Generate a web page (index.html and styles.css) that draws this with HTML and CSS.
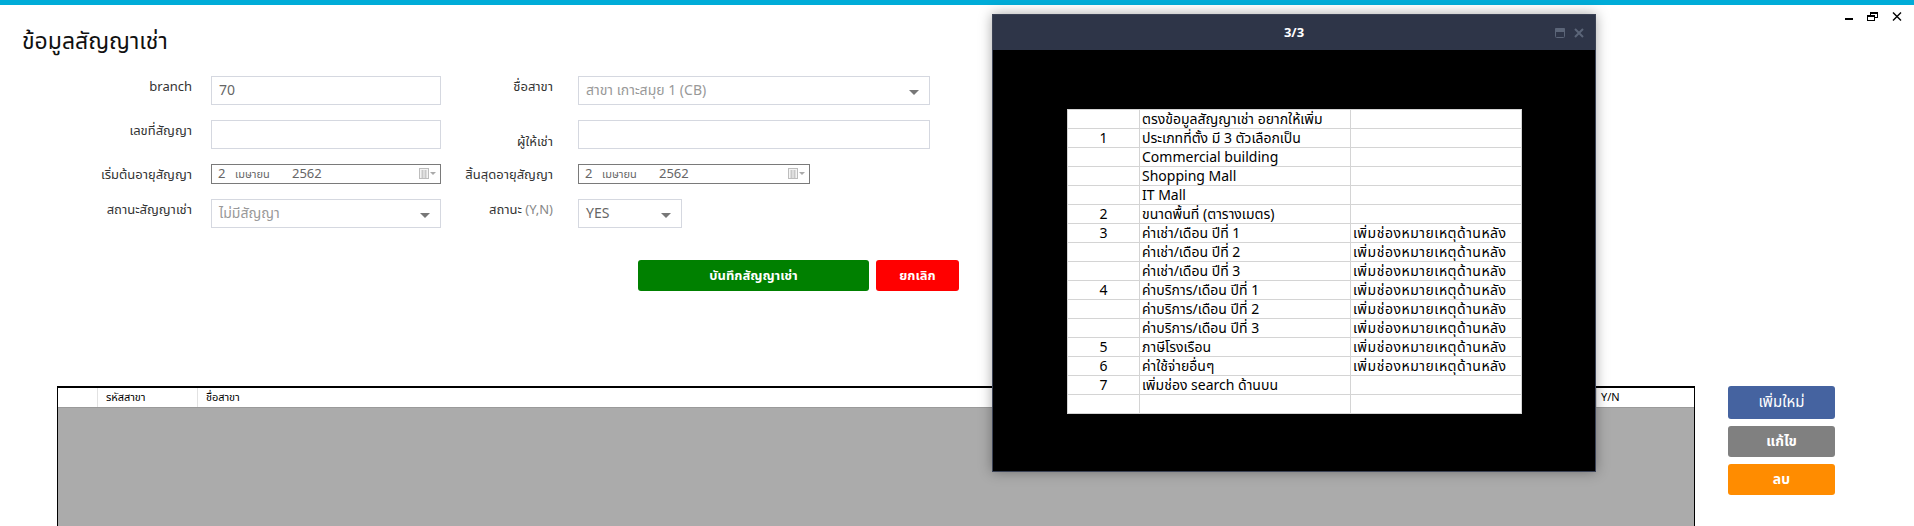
FILE: index.html
```html
<!DOCTYPE html>
<html lang="th">
<head>
<meta charset="utf-8">
<title>ข้อมูลสัญญาเช่า</title>
<link rel="stylesheet" href="styles.css">
</head>
<body>
<div class="topbar"></div>

<div class="winctl">
  <span class="wc-min"></span>
  <svg class="wc-restore" width="11" height="9" viewBox="0 0 11 9"><rect x="3.5" y="0.5" width="7" height="5" fill="none" stroke="#000"/><rect x="3" y="0" width="8" height="2" fill="#000"/><rect x="0.5" y="3.5" width="7" height="5" fill="#fff" stroke="#000"/><rect x="0" y="3" width="8" height="2" fill="#000"/></svg>
  <svg class="wc-close" width="10" height="9" viewBox="0 0 10 9"><path d="M1 0.5 L9 8.5 M9 0.5 L1 8.5" stroke="#000" stroke-width="1.4"/></svg>
</div>

<main class="page">
  <h1 class="title">ข้อมูลสัญญาเช่า</h1>

  <div class="form">
    <label class="lbl">branch</label>
    <div class="field input"><span class="val">70</span></div>
    <label class="lbl">ชื่อสาขา</label>
    <div class="field select wide"><span class="ph">สาขา เกาะสมุย 1 (CB)</span><span class="caret"></span></div>

    <label class="lbl">เลขที่สัญญา</label>
    <div class="field input"></div>
    <label class="lbl lbl-low">ผู้ให้เช่า</label>
    <div class="field input wide"></div>

    <label class="lbl">เริ่มต้นอายุสัญญา</label>
    <div class="field date"><span class="d">2</span><span class="m">เมษายน</span><span class="y">2562</span><span class="cal"><svg width="10" height="11" viewBox="0 0 10 11"><rect x="0.5" y="0.5" width="9" height="10" fill="#f4f4f4" stroke="#bdbdbd"/><path d="M2 3h6M2 5h6M2 7h6M2 9h6M3.5 2v8M6.5 2v8" stroke="#c8c8c8" stroke-width="1"/></svg><span class="mini-caret"></span></span></div>
    <label class="lbl">สิ้นสุดอายุสัญญา</label>
    <div class="field date date2"><span class="d">2</span><span class="m">เมษายน</span><span class="y">2562</span><span class="cal"><svg width="10" height="11" viewBox="0 0 10 11"><rect x="0.5" y="0.5" width="9" height="10" fill="#f4f4f4" stroke="#bdbdbd"/><path d="M2 3h6M2 5h6M2 7h6M2 9h6M3.5 2v8M6.5 2v8" stroke="#c8c8c8" stroke-width="1"/></svg><span class="mini-caret"></span></span></div>

    <label class="lbl">สถานะสัญญาเช่า</label>
    <div class="field select"><span class="ph">ไม่มีสัญญา</span><span class="caret"></span></div>
    <label class="lbl">สถานะ <span class="muted">(Y,N)</span></label>
    <div class="field select small"><span class="val">YES</span><span class="caret"></span></div>
  </div>

  <div class="actions">
    <button class="btn btn-save">บันทึกสัญญาเช่า</button>
    <button class="btn btn-cancel">ยกเลิก</button>
  </div>

  <div class="bottom">
    <div class="grid">
      <div class="grid-head">
        <div class="gh gh-row"></div>
        <div class="gh gh-code">รหัสสาขา</div>
        <div class="gh gh-name">ชื่อสาขา</div>
        <div class="gh gh-yn">Y/N</div>
      </div>
      <div class="grid-body"></div>
    </div>
    <div class="side">
      <button class="sbtn sb-new">เพิ่มใหม่</button>
      <button class="sbtn sb-edit">แก้ไข</button>
      <button class="sbtn sb-del">ลบ</button>
    </div>
  </div>
</main>

<div class="modal">
  <div class="modal-head">
    <span class="modal-title">3/3</span>
    <span class="mh-icons">
      <svg width="10" height="10" viewBox="0 0 10 10"><rect x="0.5" y="0.5" width="9" height="9" rx="1" fill="none" stroke="#5b6578"/><rect x="0" y="0" width="10" height="4" rx="1" fill="#5b6578"/></svg>
      <svg width="10" height="10" viewBox="0 0 10 10"><path d="M1 1L9 9M9 1L1 9" stroke="#5b6578" stroke-width="2"/></svg>
    </span>
  </div>
  <div class="modal-body">
    <table class="sheet">
      <tr><td></td><td>ตรงข้อมูลสัญญาเช่า อยากให้เพิ่ม</td><td></td></tr>
      <tr><td>1</td><td>ประเภทที่ตั้ง มี 3 ตัวเลือกเป็น</td><td></td></tr>
      <tr><td></td><td>Commercial building</td><td></td></tr>
      <tr><td></td><td>Shopping Mall</td><td></td></tr>
      <tr><td></td><td>IT Mall</td><td></td></tr>
      <tr><td>2</td><td>ขนาดพื้นที่ (ตารางเมตร)</td><td></td></tr>
      <tr><td>3</td><td>ค่าเช่า/เดือน ปีที่ 1</td><td>เพิ่มช่องหมายเหตุด้านหลัง</td></tr>
      <tr><td></td><td>ค่าเช่า/เดือน ปีที่ 2</td><td>เพิ่มช่องหมายเหตุด้านหลัง</td></tr>
      <tr><td></td><td>ค่าเช่า/เดือน ปีที่ 3</td><td>เพิ่มช่องหมายเหตุด้านหลัง</td></tr>
      <tr><td>4</td><td>ค่าบริการ/เดือน ปีที่ 1</td><td>เพิ่มช่องหมายเหตุด้านหลัง</td></tr>
      <tr><td></td><td>ค่าบริการ/เดือน ปีที่ 2</td><td>เพิ่มช่องหมายเหตุด้านหลัง</td></tr>
      <tr><td></td><td>ค่าบริการ/เดือน ปีที่ 3</td><td>เพิ่มช่องหมายเหตุด้านหลัง</td></tr>
      <tr><td>5</td><td>ภาษีโรงเรือน</td><td>เพิ่มช่องหมายเหตุด้านหลัง</td></tr>
      <tr><td>6</td><td>ค่าใช้จ่ายอื่นๆ</td><td>เพิ่มช่องหมายเหตุด้านหลัง</td></tr>
      <tr><td>7</td><td>เพิ่มช่อง search ด้านบน</td><td></td></tr>
      <tr><td></td><td></td><td></td></tr>
    </table>
  </div>
</div>
</body>
</html>
```

FILE: styles.css
```css
* { box-sizing: border-box; }
html, body { margin: 0; padding: 0; background: #fff; }
body {
  width: 1914px;
  height: 526px;
  overflow: hidden;
  position: relative;
  font-family: "Segoe UI", Tahoma, "Noto Sans Thai", "Noto Sans", "Liberation Sans", sans-serif;
  color: #222;
}
.topbar { height: 5px; background: #00acd8; }

.winctl {
  position: absolute;
  top: 12px;
  right: 12px;
  display: flex;
  align-items: flex-start;
  gap: 14px;
}
.wc-min { display: block; width: 8px; height: 2px; background: #000; margin-top: 6px; }

.page { padding: 0 0 0 22px; }
.title {
  margin: 0;
  padding-top: 22px;
  font-size: 23px;
  font-weight: 400;
  line-height: 30px;
  color: #111;
}

.form {
  margin-top: 19px;
  display: grid;
  grid-template-columns: 189px 230px 137px 352px;
  grid-template-rows: 29px 29px 20px 29px;
  row-gap: 15px;
  align-items: start;
}
.lbl {
  font-size: 13px;
  color: #333;
  text-align: right;
  padding-top: 2px;
  line-height: 18px;
  white-space: nowrap;
}
.form > .lbl:nth-child(4n+1) { padding-right: 19px; }
.form > .lbl:nth-child(4n+3) { padding-right: 25px; }
.lbl-low { padding-top: 13px; }
.muted { color: #888; }

.field {
  height: 29px;
  border: 1px solid #d5d8e0;
  background: #fff;
  display: flex;
  align-items: center;
  padding: 0 7px;
  font-size: 14px;
  color: #555;
  position: relative;
}
.field.wide { width: 352px; }
.field.small { width: 104px; }
.ph { color: #999; }
.val { color: #666; }
.caret {
  position: absolute;
  right: 10px;
  top: 13px;
  width: 0; height: 0;
  border-left: 5px solid transparent;
  border-right: 5px solid transparent;
  border-top: 5px solid #777;
}
.field.date {
  height: 20px;
  border: 1px solid #7a7a7a;
  font-size: 13px;
  color: #666;
  padding: 0 6px;
}
.field.date2 { width: 232px; }
.date .d { width: 17px; }
.date .m { font-size: 11px; width: 57px; }
.cal { position: absolute; right: 4px; top: 3px; display: flex; align-items: center; gap: 1px; }
.mini-caret {
  width: 0; height: 0;
  border-left: 3px solid transparent;
  border-right: 3px solid transparent;
  border-top: 3px solid #aaa;
}

.actions {
  margin: 32px 0 0 616px;
  display: flex;
  gap: 7px;
}
.btn {
  height: 31px;
  border: none;
  border-radius: 3px;
  color: #fff;
  font-family: inherit;
  font-weight: 700;
  font-size: 13px;
  padding: 0;
}
.btn-save { width: 231px; background: #008000; }
.btn-cancel { width: 83px; background: #ff0000; }

.bottom {
  margin: 95px 0 0 35px;
  display: flex;
  align-items: flex-start;
  gap: 33px;
}
.grid {
  width: 1638px;
  height: 160px;
  border: 1px solid #000;
  border-top-width: 2px;
  background: #ababab;
}
.grid-head {
  display: flex;
  height: 20px;
  background: #fff;
  border-bottom: 1px solid #9a9a9a;
  font-size: 11px;
  color: #000;
  line-height: 19px;
}
.gh { border-right: 1px solid #e2e2e2; padding-left: 8px; }
.gh-row { width: 40px; }
.gh-code { width: 100px; }
.gh-name { flex: 1; }
.gh-yn { width: 97px; border-right: none; padding-left: 4px; }

.side { display: flex; flex-direction: column; gap: 7px; width: 107px; }
.sbtn {
  height: 31px;
  border: none;
  border-radius: 3px;
  color: #fff;
  font-family: inherit;
  font-weight: 700;
  font-size: 14px;
  padding: 0;
}
.sb-new { height: 33px; background: #4563a0; font-weight: 400; font-size: 15px; }
.sb-edit { background: #808080; }
.sb-del { background: #ff8c00; }

.modal {
  position: absolute;
  left: 992px;
  top: 14px;
  width: 604px;
  height: 458px;
  background: #000;
  box-shadow: 0 0 12px rgba(0,0,0,0.35);
  border: 1px solid #3b4255;
}
.modal-head {
  height: 35px;
  background: #2e3548;
  display: flex;
  align-items: center;
  justify-content: center;
  position: relative;
}
.modal-title { color: #fff; font-weight: 700; font-size: 13px; }
.mh-icons {
  position: absolute;
  right: 11px;
  top: 13px;
  display: flex;
  gap: 9px;
}
.modal-body { padding: 59px 0 0 74px; }
.sheet {
  border-collapse: collapse;
  background: #fff;
  font-family: Tahoma, "Noto Sans Thai", "DejaVu Sans", sans-serif;
  font-size: 14px;
  color: #000;
  table-layout: fixed;
  width: 454px;
}
.sheet td {
  height: 19px;
  padding: 0 2px;
  border: 1px solid #d4d4d4;
  white-space: nowrap;
  overflow: hidden;
  line-height: 17px;
}
.sheet td:nth-child(1) { width: 72px; text-align: center; }
.sheet td:nth-child(2) { width: 211px; }
.sheet td:nth-child(3) { width: 171px; letter-spacing: 0.5px; }
```
